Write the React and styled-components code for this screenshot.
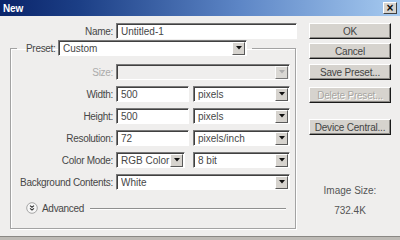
import React from "react";
import styled, { createGlobalStyle } from "styled-components";

const GlobalStyle = createGlobalStyle`
  html, body { margin: 0; padding: 0; background: #bdbab5; }
  body { font-family: "Liberation Sans", Arial, sans-serif; font-size: 10px; color: #444; }
  * { box-sizing: border-box; }
`;

function App() {
    return (
        <>
            <GlobalStyle />
            <Window>
                <TitleBar>
                    <Title>New</Title>
                    <CloseButton>×</CloseButton>
                </TitleBar>
                <Body>
                    <LeftPanel>
                        <NameRow>
                            <Label>Name:</Label>
                            <TextBox width={181}>Untitled-1</TextBox>
                        </NameRow>
                        <Group>
                            <Legend>
                                <LegendLabel>Preset:</LegendLabel>
                                <Combo width={189} value="Custom" />
                            </Legend>
                            <Rows>
                                <Label disabled>Size:</Label>
                                <Controls>
                                    <Combo width={174} disabled />
                                </Controls>
                                <Label>Width:</Label>
                                <Controls>
                                    <TextBox width={73}>500</TextBox>
                                    <Combo width={97} value="pixels" />
                                </Controls>
                                <Label>Height:</Label>
                                <Controls>
                                    <TextBox width={73}>500</TextBox>
                                    <Combo width={97} value="pixels" />
                                </Controls>
                                <Label>Resolution:</Label>
                                <Controls>
                                    <TextBox width={73}>72</TextBox>
                                    <Combo width={97} value="pixels/inch" />
                                </Controls>
                                <Label>Color Mode:</Label>
                                <Controls gap={8}>
                                    <Combo width={69} value="RGB Color" />
                                    <Combo width={97} value="8 bit" />
                                </Controls>
                                <Label>Background Contents:</Label>
                                <Controls>
                                    <Combo width={174} value="White" />
                                </Controls>
                            </Rows>
                            <AdvancedRow>
                                <svg width="12" height="12" viewBox="0 0 12 12">
                                    <circle cx="6" cy="6" r="5.3" fill="#f7f7f7" stroke="#a5a5a5" />
                                    <polyline points="4,3.6 6,5.2 8,3.6" fill="none" stroke="#333" strokeWidth="1.1" />
                                    <polyline points="4,6.4 6,8 8,6.4" fill="none" stroke="#333" strokeWidth="1.1" />
                                </svg>
                                <AdvancedText>Advanced</AdvancedText>
                                <Rule />
                            </AdvancedRow>
                        </Group>
                    </LeftPanel>
                    <RightPanel>
                        <Button top={0}>OK</Button>
                        <Button top={4}>Cancel</Button>
                        <Button top={5}>Save Preset...</Button>
                        <Button top={7} disabled>Delete Preset...</Button>
                        <Button top={16}>Device Central...</Button>
                        <SizeInfo>
                            <span>Image Size:</span>
                            <span>732.4K</span>
                        </SizeInfo>
                    </RightPanel>
                </Body>
            </Window>
        </>
    );
}

function Combo({ width, value, disabled }) {
    return (
        <ComboBox width={width} disabled={disabled}>
            <ComboText>{value}</ComboText>
            <ArrowButton disabled={disabled}>
                <svg width="6" height="4" viewBox="0 0 6 4">
                    <polygon points="0,0 6,0 3,3.5" fill={disabled ? "#a0a0a0" : "#111"} />
                </svg>
            </ArrowButton>
        </ComboBox>
    );
}

export default App;

const Window = styled.div`
    width: 400px;
    height: 237px;
    background: #efeeed;
    border-bottom: 1px solid #8a8884;
    display: flex;
    flex-direction: column;
`;
const TitleBar = styled.div`
    height: 16px;
    background: linear-gradient(to right, #0a246a 0%, #1c3f86 20%, #5d86c6 60%, #a6caf0 100%);
    display: flex;
    align-items: center;
    justify-content: space-between;
    padding: 0 3px 0 3px;
`;
const Title = styled.div`
    color: #fff;
    font-weight: 700;
    font-size: 10px;
    letter-spacing: -0.2px;
`;
const CloseButton = styled.div`
    width: 14px;
    height: 12px;
    background: #d6d3ce;
    border: 1px solid;
    border-color: #fff #404040 #404040 #fff;
    display: flex;
    align-items: center;
    justify-content: center;
    font-size: 12px;
    font-weight: 700;
    line-height: 1;
    color: #111;
`;
const Body = styled.div`
    display: flex;
    gap: 12px;
    padding: 7px 0 0 10px;
`;
const LeftPanel = styled.div`
    width: 287px;
    display: flex;
    flex-direction: column;
`;
const NameRow = styled.div`
    display: grid;
    grid-template-columns: 103px auto;
    column-gap: 3px;
    align-items: center;
`;
const Label = styled.div`
    text-align: right;
    white-space: nowrap;
    color: ${(p) => (p.disabled ? "#ababab" : "#474747")};
    letter-spacing: -0.3px;
`;
const sunken = `
    background: #fff;
    border: 1px solid;
    border-color: #7a7a7a #fff #fff #7a7a7a;
    box-shadow: inset 1px 1px 0 #404040;
`;
const TextBox = styled.div`
    ${sunken}
    width: ${(p) => p.width}px;
    height: 16px;
    padding: 0 0 0 4px;
    display: flex;
    align-items: center;
    color: #474747;
`;
const ComboBox = styled.div`
    ${sunken}
    background: ${(p) => (p.disabled ? "#efeeed" : "#fff")};
    width: ${(p) => p.width}px;
    height: 16px;
    display: flex;
    align-items: center;
    padding: 1px 1px 1px 4px;
`;
const ComboText = styled.span`
    flex: 1;
    white-space: nowrap;
    overflow: hidden;
    color: #474747;
`;
const ArrowButton = styled.div`
    width: 13px;
    height: 13px;
    background: #d6d3ce;
    border: 1px solid;
    border-color: #fff #5a5a5a #5a5a5a #fff;
    display: flex;
    align-items: center;
    justify-content: center;
    opacity: ${(p) => (p.disabled ? 0.8 : 1)};
`;
const Group = styled.fieldset`
    margin: 1px 0 0 0;
    width: 286px;
    height: 189px;
    padding: 0 0 0 6px;
    border: 1px solid #a3a3a3;
    box-shadow: inset 1px 1px 0 #fff, 1px 1px 0 #fff;
    display: flex;
    flex-direction: column;
`;
const Legend = styled.legend`
    display: flex;
    align-items: center;
    padding: 0 5px 0 9px;
`;
const LegendLabel = styled.span`
    width: 32px;
    color: #474747;
    letter-spacing: -0.3px;
`;
const Rows = styled.div`
    display: grid;
    grid-template-columns: 96px auto;
    column-gap: 3px;
    row-gap: 6px;
    align-items: center;
    margin-top: 8px;
`;
const Controls = styled.div`
    display: flex;
    gap: ${(p) => p.gap || 4}px;
`;
const AdvancedRow = styled.div`
    display: flex;
    align-items: center;
    margin: 12px 0 0 9px;
    height: 12px;
`;
const AdvancedText = styled.span`
    margin: 0 6px 0 4px;
    color: #474747;
    letter-spacing: -0.3px;
`;
const Rule = styled.div`
    width: 196px;
    height: 1px;
    background: #8f8f8f;
    box-shadow: 0 1px 0 #fff;
`;
const RightPanel = styled.div`
    width: 82px;
    display: flex;
    flex-direction: column;
`;
const Button = styled.div`
    margin-top: ${(p) => p.top}px;
    height: 16px;
    background: #d6d3ce;
    border: 1px solid;
    border-color: #fff #1a1a1a #1a1a1a #fff;
    box-shadow: inset -1px -1px 0 #8a8884;
    display: flex;
    align-items: center;
    justify-content: center;
    white-space: nowrap;
    letter-spacing: -0.2px;
    color: ${(p) => (p.disabled ? "#a8a6a2" : "#444")};
    text-shadow: ${(p) => (p.disabled ? "1px 1px 0 #fff" : "none")};
`;
const SizeInfo = styled.div`
    margin-top: 50px;
    display: flex;
    flex-direction: column;
    align-items: center;
    gap: 8px;
    color: #555;
    line-height: 12px;
`;
